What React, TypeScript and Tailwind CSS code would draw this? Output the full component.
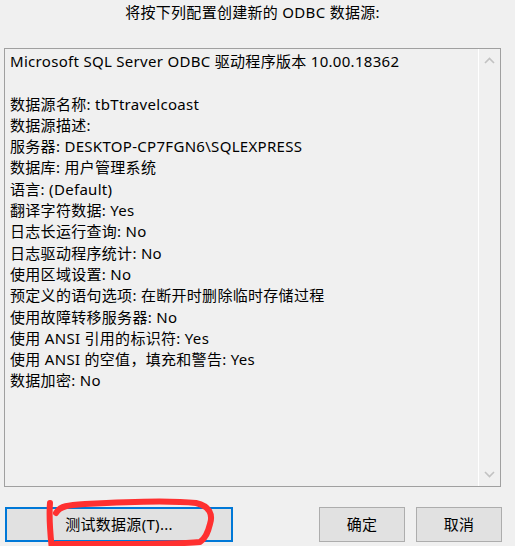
import React from "react";

const lines: string[] = [
  "Microsoft SQL Server ODBC 驱动程序版本 10.00.18362",
  "",
  "数据源名称: tbTtravelcoast",
  "数据源描述:",
  "服务器: DESKTOP-CP7FGN6\\SQLEXPRESS",
  "数据库: 用户管理系统",
  "语言: (Default)",
  "翻译字符数据: Yes",
  "日志长运行查询: No",
  "日志驱动程序统计: No",
  "使用区域设置: No",
  "预定义的语句选项: 在断开时删除临时存储过程",
  "使用故障转移服务器: No",
  "使用 ANSI 引用的标识符: Yes",
  "使用 ANSI 的空值，填充和警告: Yes",
  "数据加密: No",
];

const font = { fontFamily: '"Noto Sans", "Noto Sans CJK SC", sans-serif' };

export default function App() {
  return (
    <div
      className="relative w-[515px] h-[546px] bg-[#f0f0f0] text-[#000] overflow-hidden flex flex-col tracking-[0.3px]"
      style={font}
    >
      <div className="h-[48px] flex justify-center pt-[1px] pr-[10px]">
        <span className="text-[15px] leading-[22px]">将按下列配置创建新的 ODBC 数据源:</span>
      </div>
      <div className="ml-[4px] w-[497px] h-[439px] border border-[#a0a0a0] flex">
        <div className="flex-1 pl-[5px] pt-[2px]">
          {lines.map((l, i) => (
            <div key={i} className="text-[15px] leading-[21.3px] h-[21.3px] whitespace-pre">
              {l}
            </div>
          ))}
        </div>
        <div className="w-[22px] border-l border-white flex flex-col justify-between items-center py-[8px]">
          <svg width="11" height="7" viewBox="0 0 11 7">
            <path d="M1 6 L5.5 1.5 L10 6" fill="none" stroke="#c2c2c2" strokeWidth="1.6" />
          </svg>
          <svg width="11" height="7" viewBox="0 0 11 7">
            <path d="M1 1 L5.5 5.5 L10 1" fill="none" stroke="#c2c2c2" strokeWidth="1.6" />
          </svg>
        </div>
      </div>
      <div className="flex mt-[20px] h-[35px]">
        <button className="ml-[5px] w-[228px] h-[35px] bg-[#e1e1e1] border-2 border-[#0078d7] text-[15px] flex items-center justify-center">
          测试数据源(T)...
        </button>
        <button className="ml-[86px] w-[86px] h-[35px] bg-[#e1e1e1] border border-[#adadad] text-[15px] flex items-center justify-center">
          确定
        </button>
        <button className="ml-[11px] w-[86px] h-[35px] bg-[#e1e1e1] border border-[#adadad] text-[15px] flex items-center justify-center">
          取消
        </button>
      </div>
      <svg
        className="absolute left-0 top-[480px] pointer-events-none"
        width="260"
        height="66"
        viewBox="0 480 260 66"
      >
        <path
          d="M50 503 C49 515 50 532 52 550"
          fill="none"
          stroke="#ff3030"
          strokeWidth="6"
          strokeLinecap="round"
        />
        <path
          d="M56 513 C60 506 68 505 85 504 C120 502 170 500 196 503 C210 506 213 515 210 524 C208 532 206 538 200 542 C170 545 100 544 56 544"
          fill="none"
          stroke="#ff3030"
          strokeWidth="6"
          strokeLinecap="round"
          strokeLinejoin="round"
        />
      </svg>
    </div>
  );
}
